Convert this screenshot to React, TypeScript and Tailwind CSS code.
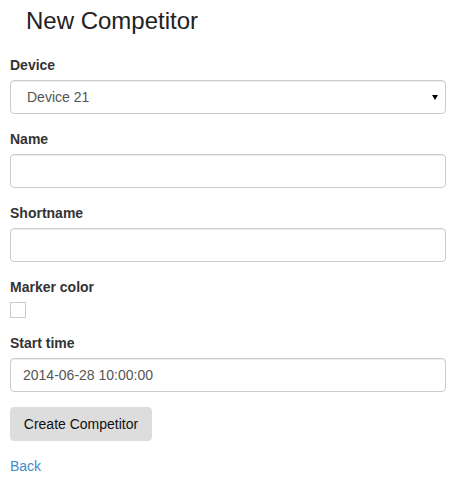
import React from "react";

const font = { fontFamily: '"Liberation Sans", Arial, Helvetica, sans-serif' };

function Field({ label, children }: { label: string; children: React.ReactNode }) {
  return (
    <div className="mb-[15px]">
      <label className="mb-[5px] block text-[14px] font-bold leading-[20px] text-[#333]">{label}</label>
      {children}
    </div>
  );
}

const inputCls =
  "block h-[34px] w-full rounded-[4px] border border-[#ccc] bg-white px-[12px] text-[14px] text-[#555] shadow-[inset_0_1px_1px_rgba(0,0,0,0.075)] outline-none";

export default function App() {
  return (
    <div style={font} className="min-h-[478px] w-[462px] bg-white pl-[10px] pr-[16px] pt-[8px] text-[14px] text-[#333]">
      <h1 className="ml-[16px] mb-[21px] text-[24px] font-normal leading-[26px] text-[#222]">New Competitor</h1>
      <Field label="Device">
        <div className="relative">
          <div className={inputCls + " flex items-center pl-[16px]"}>Device 21</div>
          <span className="pointer-events-none absolute right-[8px] top-[15px] h-0 w-0 border-l-[3px] border-r-[3px] border-t-[5px] border-l-transparent border-r-transparent border-t-black" />
        </div>
      </Field>
      <Field label="Name">
        <input type="text" className={inputCls} style={font} />
      </Field>
      <Field label="Shortname">
        <input type="text" className={inputCls} style={font} />
      </Field>
      <Field label="Marker color">
        <div className="h-[16px] w-[16px] border border-[#ccc] bg-white" />
      </Field>
      <Field label="Start time">
        <input type="text" defaultValue="2014-06-28 10:00:00" className={inputCls} style={font} />
      </Field>
      <button
        style={font}
        className="h-[34px] w-[142px] rounded-[4px] border border-[#ddd] bg-[#ddd] px-[12px] text-[14px] leading-[20px] text-[#111]"
      >
        Create Competitor
      </button>
      <div className="mt-[15px] leading-[20px]">
        <a href="#" className="text-[#428bca] no-underline">Back</a>
      </div>
    </div>
  );
}
